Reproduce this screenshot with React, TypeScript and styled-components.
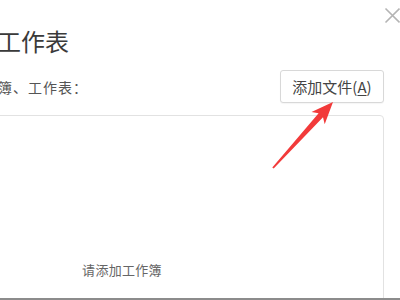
import React from 'react';
import styled, { createGlobalStyle } from 'styled-components';

const GlobalStyle = createGlobalStyle`
	html, body {
		margin: 0;
		padding: 0;
		background: #fff;
	}
	body {
		font-family: "Noto Sans CJK SC", "Noto Sans", sans-serif;
	}
`;

const Window = styled.div`
	position: relative;
	width: 400px;
	height: 300px;
	box-sizing: border-box;
	overflow: hidden;
	background: #fff;
	border-bottom: 2px solid #8c8c8c;
	display: flex;
	flex-direction: column;
	padding-right: 16px;
`;

const CloseButton = styled.button`
	position: absolute;
	top: 7px;
	left: 384px;
	width: 17px;
	height: 17px;
	padding: 0;
	border: 0;
	background: transparent;
	display: flex;
	align-items: center;
	justify-content: center;
`;

const Title = styled.h1`
	margin: 25px 0 0 -3px;
	font-size: 24px;
	line-height: 32px;
	font-weight: 400;
	color: #3a3a3a;
`;

const Toolbar = styled.div`
	display: flex;
	align-items: center;
	justify-content: space-between;
	margin-top: 13px;
`;

const Hint = styled.span`
	margin-left: -2px;
	font-size: 14px;
	color: #555;
	letter-spacing: 1px;
`;

const Button = styled.button`
	width: 104px;
	height: 33px;
	box-sizing: border-box;
	border: 1px solid #d8d8d8;
	border-radius: 3px;
	background: #fff;
	font-family: inherit;
	font-size: 15px;
	color: #444;
	padding: 0;
	box-shadow: 0 1px 1px rgba(0, 0, 0, 0.04);
	u {
		text-decoration-thickness: 1px;
		text-underline-offset: 2px;
	}
`;

const ListBox = styled.div`
	margin: 12px 0 0 -140px;
	height: 200px;
	flex-shrink: 0;
	border: 1px solid #e2e2e2;
	border-radius: 4px;
	display: flex;
	justify-content: center;
	padding-top: 145px;
	box-sizing: border-box;
`;

const Placeholder = styled.span`
	font-size: 13px;
	line-height: 18px;
	height: 18px;
	color: #666;
	letter-spacing: 0.3px;
`;

const Annotation = styled.svg`
	position: absolute;
	left: 0;
	top: 0;
	pointer-events: none;
`;

export default function App() {
	return (
		<>
			<GlobalStyle />
			<Window>
				<Title>工作表</Title>
				<Toolbar>
					<Hint>簿、工作表：</Hint>
					<Button>添加文件(<u>A</u>)</Button>
				</Toolbar>
				<ListBox>
					<Placeholder>请添加工作簿</Placeholder>
				</ListBox>
				<CloseButton aria-label="close">
					<svg width="17" height="17" viewBox="0 0 17 17">
						<path d="M1.5 1.5 L15.5 15.5 M15.5 1.5 L1.5 15.5" stroke="#b4b4b4" strokeWidth="1.6" fill="none" />
					</svg>
				</CloseButton>
				<Annotation width="400" height="300" viewBox="0 0 400 300">
					<polygon
						points="333,102 311.5,112.1 318.6,113.3 272.3,167.4 273.7,168.6 323,117.3 324.7,124.3"
						fill="#f23a3a"
					/>
				</Annotation>
			</Window>
		</>
	);
}
